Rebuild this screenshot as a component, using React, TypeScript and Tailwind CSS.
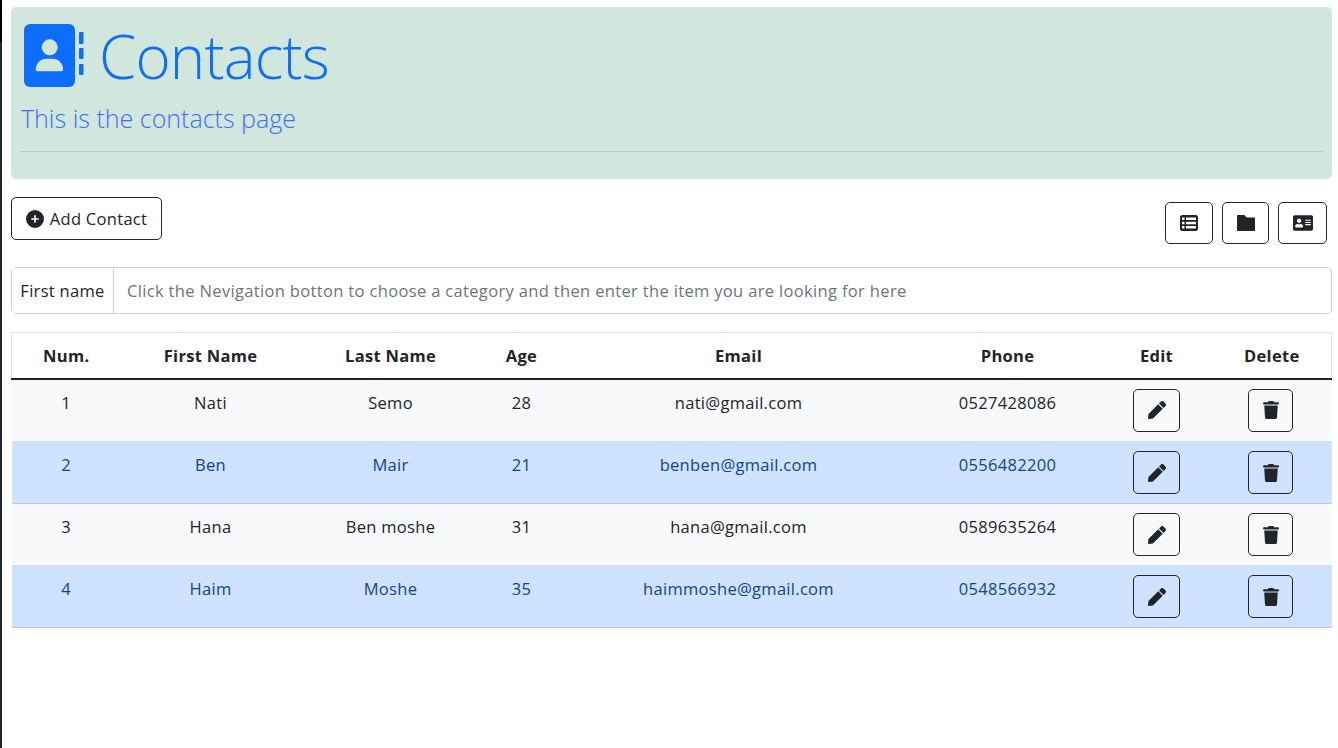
import { FaAddressCard, FaPen, FaTrash } from "react-icons/fa";
import { FaCirclePlus } from "react-icons/fa6";

const rows = [
  { n: 1, f: "Nati", l: "Semo", a: 28, e: "nati@gmail.com", p: "0527428086", primary: false },
  { n: 2, f: "Ben", l: "Mair", a: 21, e: "benben@gmail.com", p: "0556482200", primary: true },
  { n: 3, f: "Hana", l: "Ben moshe", a: 31, e: "hana@gmail.com", p: "0589635264", primary: false },
  { n: 4, f: "Haim", l: "Moshe", a: 35, e: "haimmoshe@gmail.com", p: "0548566932", primary: true },
];

const headers = ["Num.", "First Name", "Last Name", "Age", "Email", "Phone", "Edit", "Delete"];

function Cell({ children }: { children: React.ReactNode }) {
  return <td className="pt-[11px] align-top text-center">{children}</td>;
}

function BookIcon() {
  return (
    <svg width="60" height="64" viewBox="0 0 60 64" className="shrink-0" fill="#0d6efd">
      <rect x="0" y="0" width="51" height="63" rx="6" />
      <rect x="55" y="8" width="4.5" height="12" rx="1" />
      <rect x="55" y="24" width="4.5" height="11" rx="1" />
      <rect x="55" y="40" width="4.5" height="11" rx="1" />
      <circle cx="25.7" cy="23.3" r="8" fill="#d1e7dd" />
      <path d="M13.5 47.3C12.4 47.3 11.7 46.6 11.7 45.6C11.7 39.5 16.5 34.7 22.5 34.7H28.5C34.5 34.7 39.1 39.5 39.1 45.6C39.1 46.6 38.4 47.3 37.4 47.3Z" fill="#d1e7dd" />
    </svg>
  );
}

function ListIcon() {
  return (
    <svg width="18" height="16" viewBox="0 0 18 16">
      <rect width="18" height="16" rx="2.5" fill="#212529" />
      <g fill="#fff">
        <rect x="2" y="2.5" width="2.5" height="2.5" />
        <rect x="2" y="6.8" width="2.5" height="2.5" />
        <rect x="2" y="11" width="2.5" height="2.5" />
        <rect x="6" y="2.5" width="10" height="2.5" />
        <rect x="6" y="6.8" width="10" height="2.5" />
        <rect x="6" y="11" width="10" height="2.5" />
      </g>
    </svg>
  );
}

function FolderIcon() {
  return (
    <svg width="18" height="16" viewBox="0 0 18 16" fill="#212529">
      <path d="M1 0H7.5L9.5 2.5H17C17.6 2.5 18 2.9 18 3.5V15C18 15.6 17.6 16 17 16H1C.4 16 0 15.6 0 15V1C0 .4.4 0 1 0Z" />
    </svg>
  );
}

export default function App() {
  return (
    <div className="flex h-[748px] w-[1338px] overflow-hidden bg-white text-[16.5px] leading-6 tracking-[0.3px] text-[#212529] [font-family:'Open_Sans',sans-serif]">
      <div className="flex w-[2px] shrink-0 flex-col bg-[#212529]">
        <div className="h-[42px] bg-black" />
      </div>
      <main className="flex-1 pl-[9px] pr-[6px] pt-[7px]">
        <header className="flex h-[172px] flex-col rounded-[5px] bg-[#d1e7dd] px-[9px] text-[#0d6efd]">
          <div className="flex h-[91px] items-start gap-[15px] pl-[4px] pt-[17px]">
            <BookIcon />
            <h1 className="-mt-[4px] text-[60px] font-light leading-[72px] tracking-[-0.8px]">Contacts</h1>
          </div>
          <p className="mt-[3px] pl-[1px] text-[25px] font-light leading-[34px] tracking-normal text-[#3d6dfd]">This is the contacts page</p>
          <hr className="mt-[16px] border-[#b5cdd0]" />
        </header>

        <div className="flex h-[88px] items-start justify-between">
          <button className="mt-[18px] flex h-[43px] w-[151px] items-center justify-center gap-[6px] rounded-[5px] border border-[#212529]">
            <FaCirclePlus className="h-[18px] w-[18px]" />
            <span>Add Contact</span>
          </button>
          <div className="mr-[5px] mt-[23px] flex gap-[9px]">
            <button className="flex h-[42px] w-[48px] items-center justify-center rounded-[5px] border border-[#212529]"><ListIcon /></button>
            <button className="flex h-[42px] w-[47px] items-center justify-center rounded-[5px] border border-[#212529]"><FolderIcon /></button>
            <button className="flex h-[42px] w-[49px] items-center justify-center rounded-[5px] border border-[#212529]"><FaAddressCard className="h-[20px] w-[20px]" /></button>
          </div>
        </div>

        <div className="flex h-[47px] rounded-[5px] border border-[#ced4da]">
          <div className="flex w-[102px] items-center justify-center border-r border-[#ced4da] bg-white">First name</div>
          <div className="flex flex-1 items-center pl-[13px] tracking-[0.34px] text-[#6c757d]">Click the Nevigation botton to choose a category and then enter the item you are looking for here</div>
        </div>

        <table className="mt-[18px] w-[1320px] table-fixed border-collapse">
          <colgroup>
            <col className="w-[109px]" />
            <col className="w-[180px]" />
            <col className="w-[180px]" />
            <col className="w-[82px]" />
            <col className="w-[352px]" />
            <col className="w-[186px]" />
            <col className="w-[112px]" />
            <col className="w-[119px]" />
          </colgroup>
          <thead>
            <tr className="h-[46px] border-x border-t border-x-[#dee2e6] border-t-[#dee2e6] border-b-2 border-b-[#212529]">
              {headers.map((h) => (
                <th key={h} className="pt-[1px] text-center font-bold">{h}</th>
              ))}
            </tr>
          </thead>
          <tbody>
            {rows.map((r) => (
              <tr
                key={r.n}
                className={
                  r.primary
                    ? "h-[62px] border-b border-[#bacbe6] bg-[#cfe2ff] text-[#0f458f]"
                    : r.n === 1
                      ? "h-[63px] border-b border-[#dee2e6] bg-[#f8f9fa]"
                      : "h-[62px] border-b border-[#dee2e6] bg-[#f8f9fa]"
                }
              >
                <Cell>{r.n}</Cell>
                <Cell>{r.f}</Cell>
                <Cell>{r.l}</Cell>
                <Cell>{r.a}</Cell>
                <Cell>{r.e}</Cell>
                <Cell>{r.p}</Cell>
                <td className="align-top">
                  <div className="flex justify-center pt-[9px]">
                    <button className="flex h-[43px] w-[47px] items-center justify-center rounded-[5px] border border-[#212529] text-[#212529]"><FaPen className="h-[18px] w-[18px]" /></button>
                  </div>
                </td>
                <td className="align-top">
                  <div className="flex justify-center pr-[3px] pt-[9px]">
                    <button className="flex h-[43px] w-[45px] items-center justify-center rounded-[5px] border border-[#212529] text-[#212529]"><FaTrash className="h-[18px] w-[18px]" /></button>
                  </div>
                </td>
              </tr>
            ))}
          </tbody>
        </table>
      </main>
    </div>
  );
}
